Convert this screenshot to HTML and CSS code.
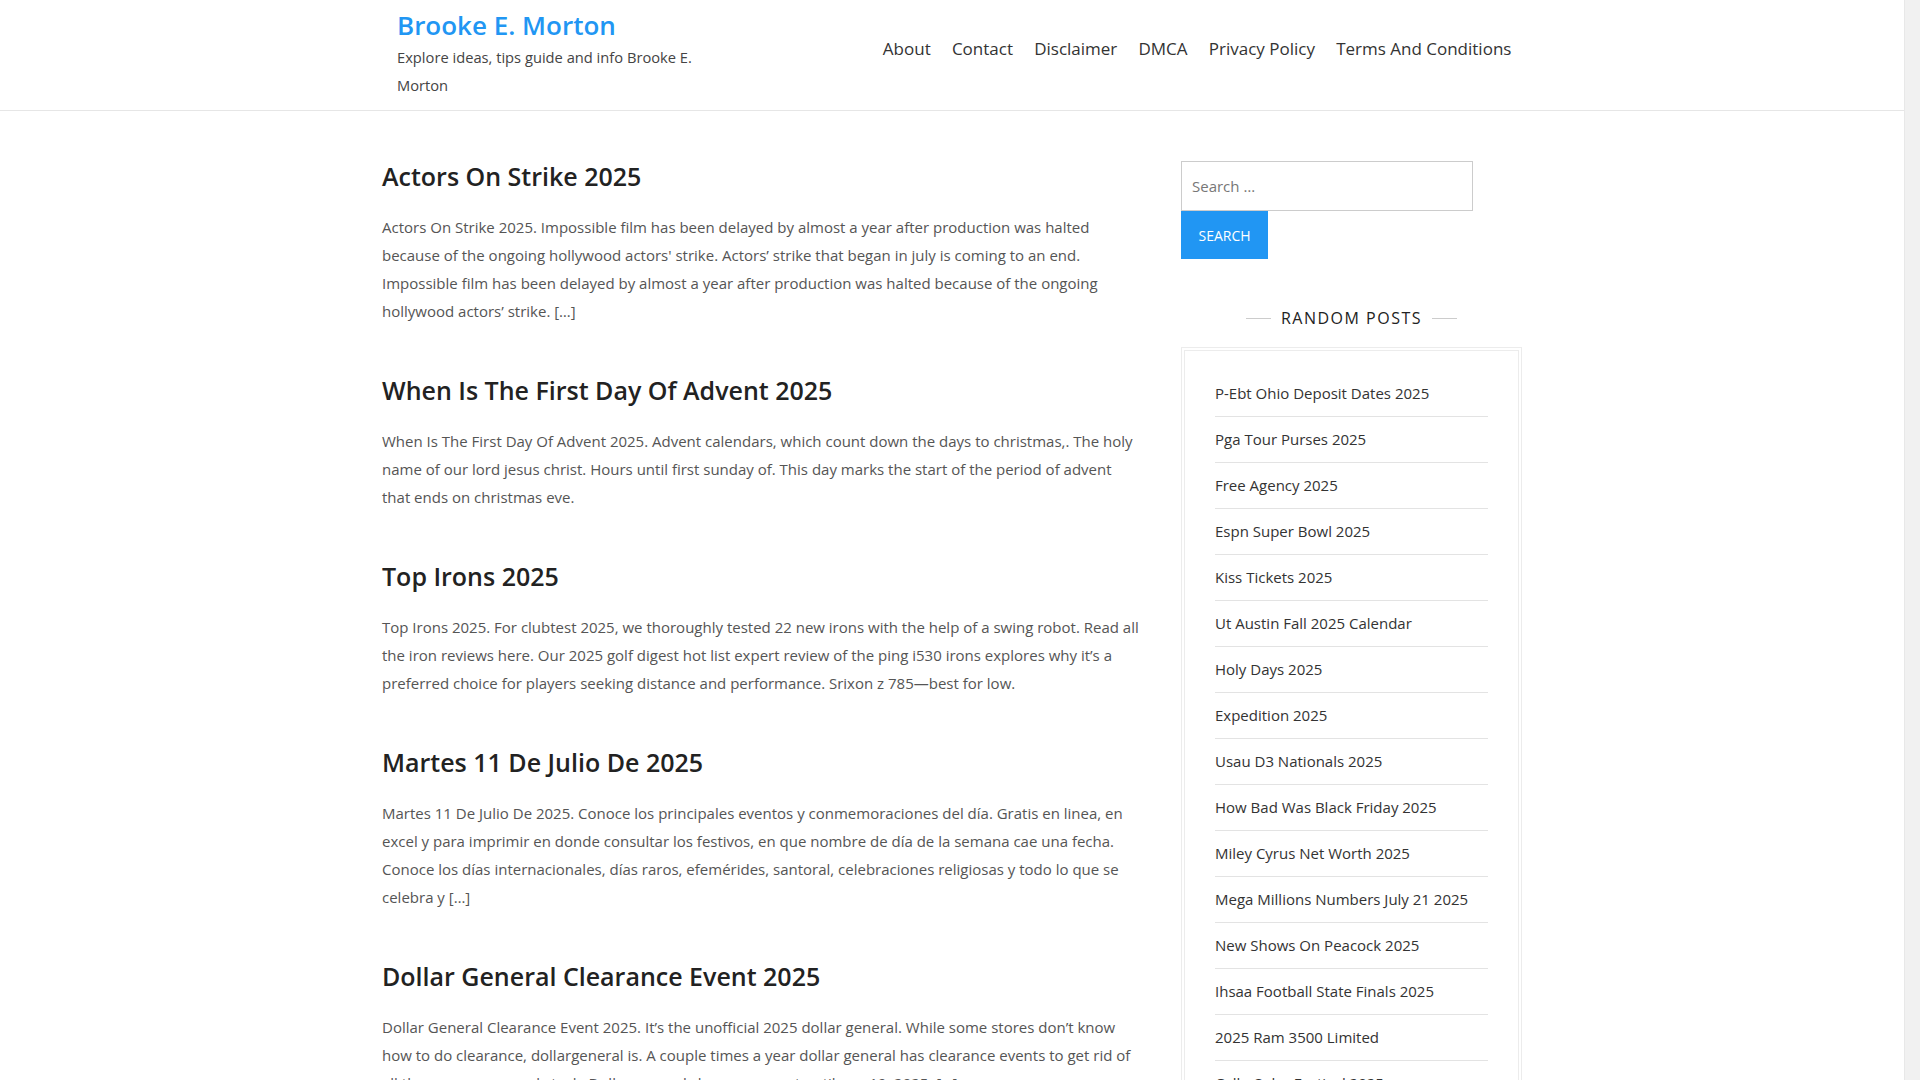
FILE: index.html
```html
<!DOCTYPE html>
<html lang="en">
<head>
<meta charset="utf-8">
<title>Brooke E. Morton</title>
<link rel="stylesheet" href="styles.css">
</head>
<body>
<div class="page">
<header class="site-header">
  <div class="container header-inner">
    <div class="branding">
      <div class="site-title">Brooke E. Morton</div>
      <div class="site-desc">Explore ideas, tips guide and info Brooke E. Morton</div>
    </div>
    <nav class="main-nav">
      <a href="#">About</a>
      <a href="#">Contact</a>
      <a href="#">Disclaimer</a>
      <a href="#">DMCA</a>
      <a href="#">Privacy Policy</a>
      <a href="#">Terms And Conditions</a>
    </nav>
  </div>
</header>
<div class="container main-row">
  <main class="content">
    <article class="post">
      <h2 class="post-title">Actors On Strike 2025</h2>
      <p>Actors On Strike 2025. Impossible film has been delayed by almost a year after production was halted because of the ongoing hollywood actors' strike. Actors’ strike that began in july is coming to an end. Impossible film has been delayed by almost a year after production was halted because of the ongoing hollywood actors’ strike. […]</p>
    </article>
    <article class="post">
      <h2 class="post-title">When Is The First Day Of Advent 2025</h2>
      <p>When Is The First Day Of Advent 2025. Advent calendars, which count down the days to christmas,. The holy name of our lord jesus christ. Hours until first sunday of. This day marks the start of the period of advent that ends on christmas eve.</p>
    </article>
    <article class="post">
      <h2 class="post-title">Top Irons 2025</h2>
      <p>Top Irons 2025. For clubtest 2025, we thoroughly tested 22 new irons with the help of a swing robot. Read all the iron reviews here. Our 2025 golf digest hot list expert review of the ping i530 irons explores why it’s a preferred choice for players seeking distance and performance. Srixon z 785—best for low.</p>
    </article>
    <article class="post">
      <h2 class="post-title">Martes 11 De Julio De 2025</h2>
      <p>Martes 11 De Julio De 2025. Conoce los principales eventos y conmemoraciones del día. Gratis en linea, en excel y para imprimir en donde consultar los festivos, en que nombre de día de la semana cae una fecha. Conoce los días internacionales, días raros, efemérides, santoral, celebraciones religiosas y todo lo que se celebra y […]</p>
    </article>
    <article class="post">
      <h2 class="post-title">Dollar General Clearance Event 2025</h2>
      <p>Dollar General Clearance Event 2025. It’s the unofficial 2025 dollar general. While some stores don’t know how to do clearance, dollargeneral is. A couple times a year dollar general has clearance events to get rid of all the excess seasonal stock. Dollar general clearance event until nov 19, 2025. […]</p>
    </article>
  </main>
  <aside class="sidebar">
    <form class="search-form">
      <input class="search-field" type="search" placeholder="Search …">
      <button class="search-submit" type="button">Search</button>
    </form>
    <h3 class="widget-title"><span>Random Posts</span></h3>
    <div class="widget-box">
      <ul class="post-list">
        <li><a href="#">P-Ebt Ohio Deposit Dates 2025</a></li>
        <li><a href="#">Pga Tour Purses 2025</a></li>
        <li><a href="#">Free Agency 2025</a></li>
        <li><a href="#">Espn Super Bowl 2025</a></li>
        <li><a href="#">Kiss Tickets 2025</a></li>
        <li><a href="#">Ut Austin Fall 2025 Calendar</a></li>
        <li><a href="#">Holy Days 2025</a></li>
        <li><a href="#">Expedition 2025</a></li>
        <li><a href="#">Usau D3 Nationals 2025</a></li>
        <li><a href="#">How Bad Was Black Friday 2025</a></li>
        <li><a href="#">Miley Cyrus Net Worth 2025</a></li>
        <li><a href="#">Mega Millions Numbers July 21 2025</a></li>
        <li><a href="#">New Shows On Peacock 2025</a></li>
        <li><a href="#">Ihsaa Football State Finals 2025</a></li>
        <li><a href="#">2025 Ram 3500 Limited</a></li>
        <li><a href="#">Calle Ocho Festival 2025</a></li>
        <li><a href="#">Best Fantasy Books 2025</a></li>
      </ul>
    </div>
  </aside>
</div>
</div>
</body>
</html>
```

FILE: styles.css
```css
* { box-sizing: border-box; }
html { margin: 0; padding: 0; background: #f1f1f1; }
body {
  margin: 0;
  padding: 0;
  font-family: "Open Sans", "DejaVu Sans", sans-serif;
  color: #555;
}
.page {
  margin-right: 15px;
  background: #fff;
  border-right: 1px solid #e8e8e8;
}
a { text-decoration: none; color: inherit; }
.container { width: 1140px; margin: 0 auto; }

.site-header { border-bottom: 1px solid #e6e6e6; }
.header-inner {
  display: flex;
  justify-content: space-between;
  align-items: flex-start;
  padding: 8px 0 11px 15px;
}
.branding { width: 310px; }
.site-title {
  font-size: 26px;
  line-height: 35px;
  font-weight: 600;
  color: #2196f3;
}
.site-desc {
  font-size: 14.7px;
  line-height: 28px;
  color: #444;
}
.main-nav {
  display: flex;
  margin-top: 28px;
  padding-right: 0;
}
.main-nav a {
  font-size: 17px;
  line-height: 26px;
  font-weight: 500;
  color: #333;
  padding: 0 10.6px;
}

.main-row {
  display: flex;
  align-items: flex-start;
  padding-top: 48px;
}
.content { width: 759px; flex: 0 0 759px; }
.post { margin-bottom: 48px; }
.post-title {
  margin: 0 0 20px;
  font-size: 25px;
  line-height: 34px;
  font-weight: 600;
  color: #222;
}
.post p {
  margin: 0;
  font-size: 15px;
  line-height: 28px;
  color: #555;
}

.sidebar { width: 341px; margin-left: auto; padding-top: 2px; }
.search-form { display: flex; flex-direction: column; align-items: flex-start; }
.search-field {
  width: 292px;
  height: 50px;
  border: 1px solid #ccc;
  padding: 0 10px;
  font-family: inherit;
  font-size: 15px;
  color: #555;
  outline: none;
  border-radius: 0;
  margin: 0;
}
.search-field::placeholder { color: #777; }
.search-submit {
  width: 87px;
  height: 48px;
  border: 0;
  background: #2196f3;
  color: #fff;
  font-family: inherit;
  font-size: 14px;
  font-weight: 500;
  text-transform: uppercase;
  padding: 0;
  margin: 0;
}
.widget-title {
  margin: 44px 0 14px;
  text-align: center;
  font-size: 16px;
  line-height: 30px;
  font-weight: 500;
  letter-spacing: 1.5px;
  text-transform: uppercase;
  color: #222;
  display: flex;
  justify-content: center;
  align-items: center;
  gap: 10px;
}
.widget-title::before,
.widget-title::after {
  content: "";
  width: 25px;
  height: 1px;
  background: #ccc;
}
.widget-box {
  border: 1px solid #ececec;
  padding: 2px;
}
.post-list {
  list-style: none;
  margin: 0;
  border: 1px solid #ececec;
  padding: 20px 30px 0;
}
.post-list li {
  padding: 11px 0;
  line-height: 23px;
  font-size: 15px;
  color: #333;
  border-bottom: 1px solid #e3e3e3;
}
```
